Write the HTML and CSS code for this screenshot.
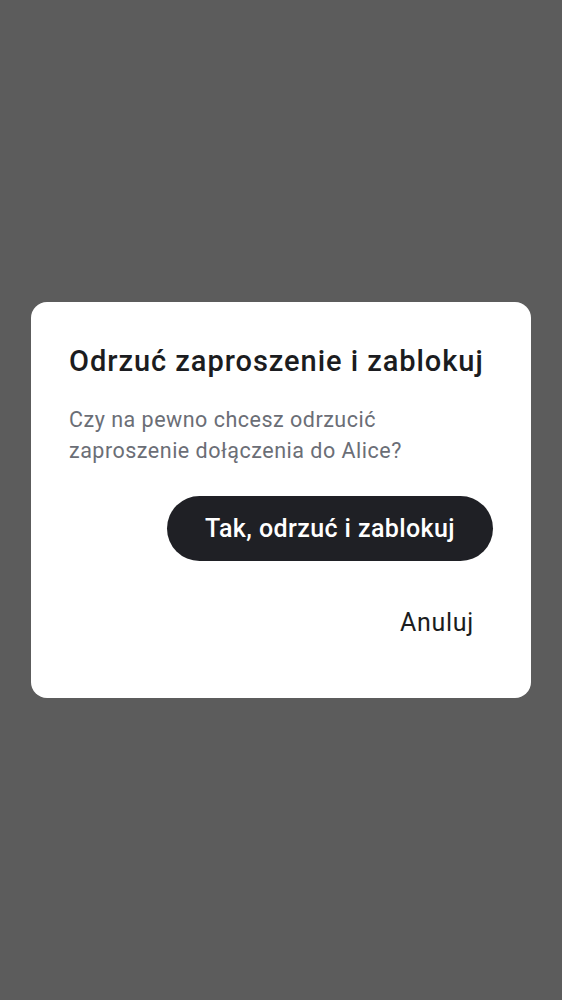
FILE: index.html
```html
<!DOCTYPE html>
<html lang="pl">
<head>
<meta charset="utf-8">
<link rel="stylesheet" href="styles.css">
</head>
<body>
<div class="overlay">
  <div class="dialog">
    <h1 class="title">Odrzuć zaproszenie i zablokuj</h1>
    <p class="text">Czy na pewno chcesz odrzucić zaproszenie dołączenia do Alice?</p>
    <div class="actions">
      <button class="btn primary">Tak, odrzuć i zablokuj</button>
      <button class="btn link">Anuluj</button>
    </div>
  </div>
</div>
</body>
</html>
```
FILE: styles.css
```css
html, body {
  margin: 0;
  padding: 0;
  height: 100%;
}
body {
  background: #5c5c5c;
  font-family: Roboto, "Noto Sans", sans-serif;
}
.overlay {
  height: 1000px;
  display: flex;
  align-items: center;
  justify-content: center;
  padding: 0 31px;
  box-sizing: border-box;
}
.dialog {
  width: 500px;
  background: #fff;
  border-radius: 16px;
  padding: 39px 38px 43px;
  box-sizing: border-box;
}
.title {
  margin: 0;
  font-size: 29px;
  font-weight: 500;
  letter-spacing: 0.95px;
  line-height: 40px;
  color: #1b1c20;
}
.text {
  margin: 23px 0 0;
  font-size: 21.5px;
  letter-spacing: 0.5px;
  line-height: 31px;
  color: #6b6e76;
  padding-right: 40px;
}
.actions {
  display: flex;
  flex-direction: column;
  align-items: flex-end;
  margin-top: 30px;
}
.btn {
  font-family: Roboto, "Noto Sans", sans-serif;
  border: none;
  cursor: pointer;
  font-size: 25px;
  font-weight: 500;
  letter-spacing: 0.4px;
}
.primary {
  background: #1f2025;
  color: #fff;
  height: 65px;
  padding: 0 38px;
  border-radius: 33px;
}
.link {
  background: none;
  color: #1b1c20;
  font-weight: 400;
  letter-spacing: 0.7px;
  height: 65px;
  padding: 0 19px;
  margin-top: 29px;
}
```
